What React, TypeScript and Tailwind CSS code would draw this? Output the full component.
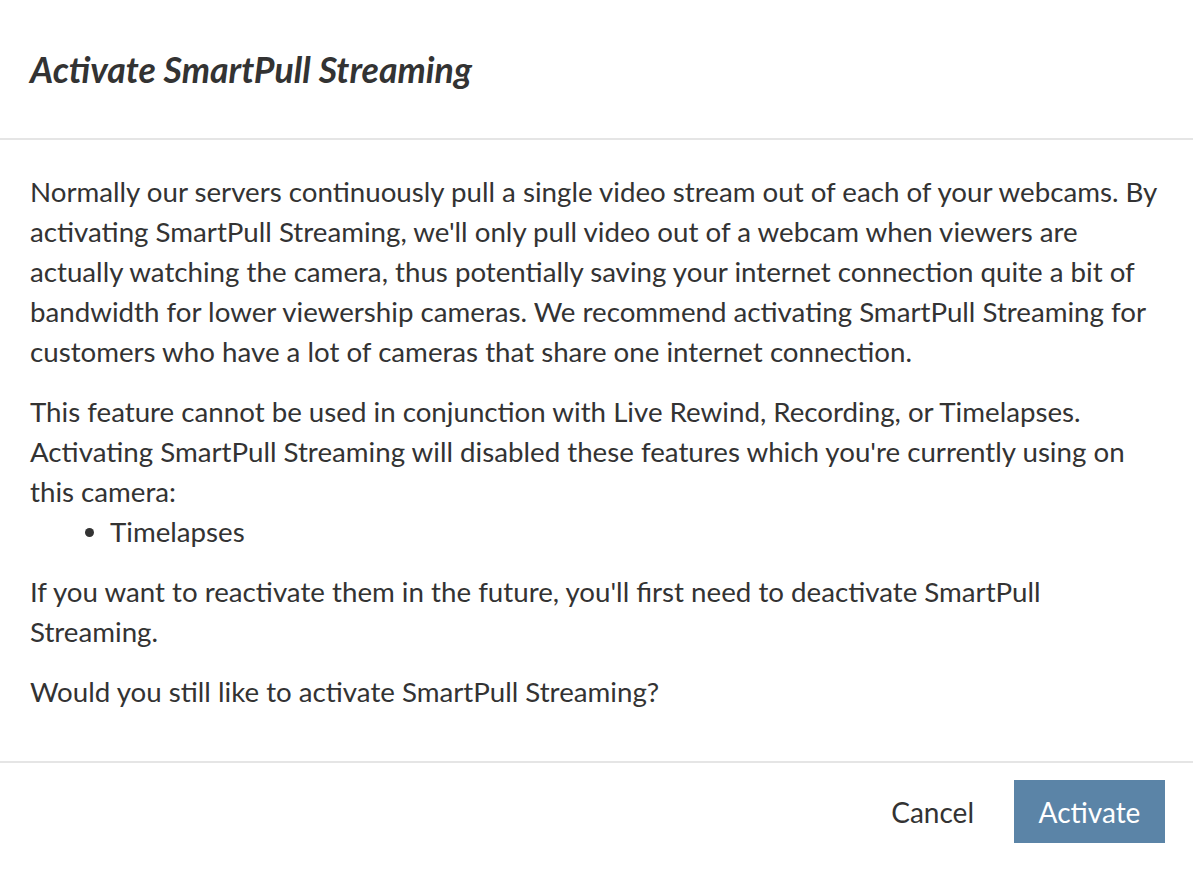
export default function App() {
  return (
    <div className="min-h-screen bg-white text-[#333333]" style={{ fontFamily: 'Lato, "Noto Sans", sans-serif' }}>
      <div className="px-[30px] pt-[48px] pb-[46px] border-b-2 border-[#e5e5e5]">
        <h1 className="text-[35.7px] leading-[44px] font-bold italic">Activate SmartPull Streaming</h1>
      </div>
      <div className="pl-[30px] pr-[30px] pt-[32px] pb-[49px] text-[27.7px] leading-[40px] border-b-2 border-[#e5e5e5]">
        <p className="mb-[20px]">
          Normally our servers continuously pull a single video stream out of each of your webcams. By activating
          SmartPull Streaming, we'll only pull video out of a webcam when viewers are actually watching the camera,
          thus potentially saving your internet connection quite a bit of bandwidth for lower viewership cameras. We
          recommend activating SmartPull Streaming for customers who have a lot of cameras that share one internet
          connection.
        </p>
        <p>
          This feature cannot be used in conjunction with Live Rewind, Recording, or Timelapses. Activating SmartPull
          Streaming will disabled these features which you're currently using on this camera:
        </p>
        <ul className="list-disc pl-[80px] mb-[20px]">
          <li>Timelapses</li>
        </ul>
        <p className="mb-[20px]">
          If you want to reactivate them in the future, you'll first need to deactivate SmartPull Streaming.
        </p>
        <p>Would you still like to activate SmartPull Streaming?</p>
      </div>
      <div className="flex justify-end items-center gap-[40px] px-[28px] pt-[17px]">
        <button className="text-[28px] leading-[40px] text-[#333333]">Cancel</button>
        <button className="bg-[#5b84a7] text-white text-[28px] leading-[40px] w-[151px] h-[63px]">Activate</button>
      </div>
    </div>
  );
}
